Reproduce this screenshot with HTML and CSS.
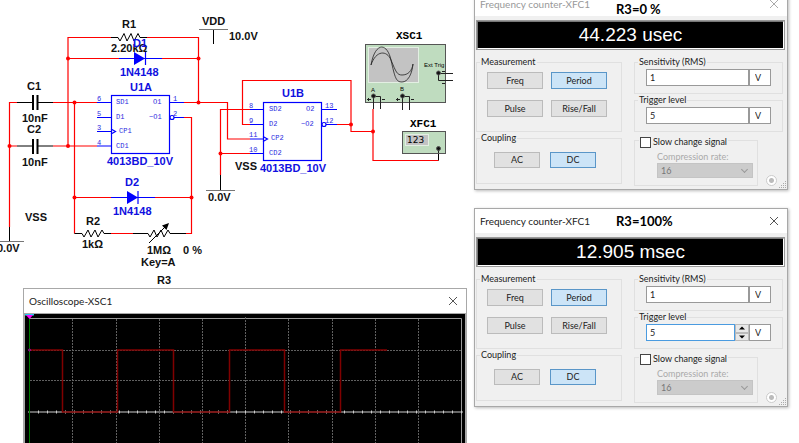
FILE: index.html
```html
<!DOCTYPE html>
<html lang="en">
<head>
  <meta charset="UTF-8" />
  <meta name="viewport" content="width=device-width, initial-scale=1" />
  <title>4013 oscillator</title>
  <link rel="stylesheet" href="styles.css">
</head>
<body>
  <main class="workspace">
    <div class="bench">
      <svg class="schematic" viewBox="0 0 474 288" role="img" aria-label="Oscillator schematic">
        <!-- red nets -->
        <g class="wire">
          <path d="M113 37.5H68V146M146 37.5H198.5V102.5M68 58.5H119M162 58.5H198.5" />
          <path d="M17 102.5H9.5V227M9.5 146H17M53 102.5H97M53 146H97M74.5 102.5V233.5" />
          <path d="M183 102.5H227.5V139H250M184 117.5H191.5V233.5H186" />
          <path d="M74.5 197.5H111M155 197.5H191.5M111 233.5H133" />
          <path d="M250 109.5H220.5V175M220.5 153.5H250M250 124.5H242.5V80.5H351V131.5H373M336 124.5H351" />
          <path d="M373 109V160.5H438.5" />
        </g>
        <g class="node">
          <circle cx="68" cy="58.5" r="2" /><circle cx="198.5" cy="58.5" r="2" />
          <circle cx="198.5" cy="102.5" r="2" /><circle cx="74.5" cy="102.5" r="2" />
          <circle cx="68" cy="146" r="2" /><circle cx="9.5" cy="146" r="2" />
          <circle cx="74.5" cy="197.5" r="2" /><circle cx="191.5" cy="197.5" r="2" />
          <circle cx="220.5" cy="153.5" r="2" /><circle cx="351" cy="124.5" r="2" />
          <circle cx="373" cy="131.5" r="2" />
        </g>

        <!-- resistors, capacitors, supplies -->
        <g class="part">
          <path d="M111 37.5H118L120 41L124 33.500L127 41L131 33.500L134 41L138 33.500L140 37.5H147" />
          <path d="M17 102.5H33M38 102.5H53M17 146H33M38 146H53" />
          <path d="M74.5 233.5H82L84 237L88 230L91 237L95 230L98 237L102 230L104 233.5H111" />
          <path d="M133 233.5H148L150 237L154 230L157 237L161 230L164 237L168 230L170 233.5H186" />
          <path d="M149 243L165 227" />
          <path d="M9.5 227V241.5M220.5 175V190M213.5 29.5V44M438.5 160.5V150" />
        </g>
        <path class="plate" d="M33 95V110M37.5 95V110M33 139V154M37.5 139V154" />
        <path class="rail" d="M0 241.500H24M206 190.500H235M199 29.500H228" />
        <path d="M169 223L166.500 230L162 225.500Z" />

        <!-- diodes and flip-flops -->
        <g class="chip">
          <path d="M119 58.5H162M145.500 52V65M111 197.5H155M138 191V204" />
          <rect x="111.500" y="95.500" width="58" height="58" />
          <path d="M97 102.5H111M97 117.5H111M97 131.5H111M97 146H111M169 102.5H184M174 117.5H184M111 129L115.500 131.5L111 134" />
          <circle cx="172" cy="117.5" r="2" />
          <rect x="263.500" y="102.500" width="58" height="58" />
          <path d="M250 109.5H263M250 124.5H263M250 139H263M250 153.5H263M321 109.5H337M326 124.5H337M263 136.500L267.500 139L263 141.500" />
          <circle cx="324" cy="124.5" r="2" />
        </g>
        <path class="diode" d="M134 52L145 58.5L134 65ZM127 191L138 197.5L127 204Z" />

        <g class="label">
          <text x="122" y="28">R1</text>
          <text x="111" y="52">2.20kΩ</text>
          <text x="202" y="25">VDD</text>
          <text x="229" y="40">10.0V</text>
          <text x="27" y="90">C1</text>
          <text x="22" y="122">10nF</text>
          <text x="27" y="133">C2</text>
          <text x="22" y="166">10nF</text>
          <text x="25" y="221">VSS</text>
          <text x="-3" y="252">0.0V</text>
          <text x="86" y="225">R2</text>
          <text x="82" y="248">1kΩ</text>
          <text x="147" y="254">1MΩ</text>
          <text x="183" y="254">0 %</text>
          <text x="141" y="266">Key=A</text>
          <text x="157" y="284">R3</text>
          <text x="208" y="201">0.0V</text>
          <text x="235" y="170">VSS</text>
        </g>
        <g class="label label-blue">
          <text x="133" y="47">D1</text>
          <text x="120" y="76">1N4148</text>
          <text x="130" y="91">U1A</text>
          <text x="107" y="165">4013BD_10V</text>
          <text x="125" y="186">D2</text>
          <text x="113" y="215">1N4148</text>
          <text x="282" y="97">U1B</text>
          <text x="260" y="172">4013BD_10V</text>
        </g>
        <g class="pin">
          <text x="97" y="101">6</text><text x="97" y="116">5</text>
          <text x="97" y="130">3</text><text x="97" y="145">4</text>
          <text x="173" y="101">1</text><text x="173" y="116">2</text>
          <text x="116" y="104">SD1</text><text x="116" y="119">D1</text>
          <text x="119" y="133">CP1</text><text x="116" y="148">CD1</text>
          <text x="153" y="104">O1</text><text x="149" y="119">~O1</text>
          <text x="249" y="108">8</text><text x="249" y="123">9</text>
          <text x="249" y="137">11</text><text x="249" y="152">10</text>
          <text x="325" y="108">13</text><text x="325" y="123">12</text>
          <text x="269" y="111">SD2</text><text x="269" y="126">D2</text>
          <text x="271" y="140">CP2</text><text x="269" y="155">CD2</text>
          <text x="306" y="111">O2</text><text x="301" y="126">~O2</text>
        </g>

        <!-- instruments -->
        <g class="instrument">
          <rect x="365.500" y="44.500" width="80" height="58" />
          <rect x="402.500" y="131.500" width="43" height="22" />
        </g>
        <g class="glass">
          <rect x="368.500" y="47.500" width="50" height="35" />
          <rect x="405.500" y="134.500" width="23" height="11" />
        </g>
        <g class="curve">
          <path d="M371 65C375 42 387 42 391 60C395 78 396 82 402 82C408 82 412 74 413 64" />
          <path d="M371 65C376 50 387 50 391 60C396 72 397 75 402 75C408 75 412 71 413 64" />
        </g>
        <g class="trace">
          <path d="M373.500 96V109M380.500 109V96.500H374M402.500 96V110M409.500 110V96.500H403M438 73.500H453M438.500 74V80.500H453M438.500 149V153" />
          <path d="M367 99.500H371M368.500 98V101M382 99.500H385M396 99.500H400M397.500 98V101M411 99.500H414M442 71.500H445M442 83.500H445" />
        </g>
        <g class="jack">
          <circle cx="373.500" cy="96" r="2" /><circle cx="402.500" cy="96" r="2" />
          <circle cx="438.500" cy="73" r="2" /><circle cx="438.500" cy="148.500" r="2" />
        </g>
        <g class="tag">
          <text x="371" y="92">A</text><text x="400" y="91">B</text>
          <text x="424" y="67">Ext Trig</text>
        </g>
        <text class="readout" x="407" y="143">123</text>
        <g class="label-mono">
          <text x="396" y="39">XSC1</text><text x="410" y="127">XFC1</text>
        </g>
      </svg>

      <section class="window scope" aria-label="Oscilloscope">
        <header class="titlebar">
          <h2>Oscilloscope-XSC1</h2>
          <button class="close" type="button" aria-label="Close"><svg viewBox="0 0 10 10"><path d="M1 1L9 9M9 1L1 9" /></svg></button>
        </header>
        <svg class="scope-screen" viewBox="25 314 440 129" role="img" aria-label="Square wave">
          <path class="frame" d="M29 318.500H461.500V443" />
          <path class="grid" d="M72.500 319V443M116.500 319V443M159.500 319V443M202.500 319V443M245.500 317V443M288.500 319V443M332.500 319V443M375.500 319V443M418.500 319V443M30 350.500H461M30 380.500H461" />
          <path class="axis" d="M28 412H463" />
          <path class="ticks" d="M29 412H463" />
          <path class="wave" d="M29 350H62.500V412H117.500V350H173.500V412H229.500V350H284.500V412H340.500V350H387" />
          <path class="cursor-line" d="M29.500 316V443" />
          <path class="cursor-cyan" d="M25 314H34V315.500H25Z" />
          <path class="cursor-flag" d="M26 315H33L29.500 319Z" />
          <circle class="cursor-dot" cx="29.500" cy="350" r="1" />
        </svg>
      </section>
    </div>

    <div class="counters">
      <section class="window counter inactive" aria-label="Frequency counter, R3 at 0 %">
        <header class="titlebar">
          <h2>Frequency counter-XFC1</h2>
          <strong class="note note-low">R3=0 %</strong>
          <button class="close" type="button" aria-label="Close"><svg viewBox="0 0 10 10"><path d="M1 1L9 9M9 1L1 9" /></svg></button>
        </header>
        <output class="lcd">44.223 usec</output>
        <form class="panel">
          <div class="column">
            <fieldset class="group measurement">
              <legend>Measurement</legend>
              <button type="button">Freq</button>
              <button type="button" class="on">Period</button>
              <button type="button">Pulse</button>
              <button type="button">Rise/Fall</button>
            </fieldset>
            <fieldset class="group coupling">
              <legend>Coupling</legend>
              <button type="button">AC</button>
              <button type="button" class="on">DC</button>
            </fieldset>
          </div>
          <div class="column">
            <fieldset class="group level">
              <legend>Sensitivity (RMS)</legend>
              <input class="value" type="text" value="1" aria-label="Sensitivity">
              <input class="unit" type="text" value="V" aria-label="Sensitivity unit">
            </fieldset>
            <fieldset class="group level">
              <legend>Trigger level</legend>
              <input class="value" type="text" value="5" aria-label="Trigger level">
              <input class="unit" type="text" value="V" aria-label="Trigger level unit">
            </fieldset>
            <div class="bottom">
              <fieldset class="group slow">
                <legend><input type="checkbox" id="slow-1"><label for="slow-1">Slow change signal</label></legend>
                <label class="off" for="rate-1">Compression rate:</label>
                <div class="rate"><select id="rate-1" disabled><option>16</option></select></div>
              </fieldset>
              <input class="lamp" type="radio" checked aria-label="Input active">
            </div>
          </div>
        </form>
        <svg class="grip" viewBox="0 0 8 8"><path d="M6 0h1v1h-1zM4 2h1v1h-1zM6 2h1v1h-1zM2 4h1v1h-1zM4 4h1v1h-1zM6 4h1v1h-1zM0 6h1v1h-1zM2 6h1v1h-1zM4 6h1v1h-1zM6 6h1v1h-1z" /></svg>
      </section>

      <section class="window counter" aria-label="Frequency counter, R3 at 100%">
        <header class="titlebar">
          <h2>Frequency counter-XFC1</h2>
          <strong class="note">R3=100%</strong>
          <button class="close" type="button" aria-label="Close"><svg viewBox="0 0 10 10"><path d="M1 1L9 9M9 1L1 9" /></svg></button>
        </header>
        <output class="lcd">12.905 msec</output>
        <form class="panel">
          <div class="column">
            <fieldset class="group measurement">
              <legend>Measurement</legend>
              <button type="button">Freq</button>
              <button type="button" class="on">Period</button>
              <button type="button">Pulse</button>
              <button type="button">Rise/Fall</button>
            </fieldset>
            <fieldset class="group coupling">
              <legend>Coupling</legend>
              <button type="button">AC</button>
              <button type="button" class="on">DC</button>
            </fieldset>
          </div>
          <div class="column">
            <fieldset class="group level">
              <legend>Sensitivity (RMS)</legend>
              <input class="value" type="text" value="1" aria-label="Sensitivity">
              <input class="unit" type="text" value="V" aria-label="Sensitivity unit">
            </fieldset>
            <fieldset class="group level">
              <legend>Trigger level</legend>
              <input class="value editing" type="text" value="5" aria-label="Trigger level" autofocus>
              <span class="spin">
                <button type="button" aria-label="Up"><svg viewBox="0 0 6 4"><path d="M0 3.500L3 0.500L6 3.500Z" /></svg></button>
                <button type="button" aria-label="Down"><svg viewBox="0 0 6 4"><path d="M0 0.500L3 3.500L6 0.500Z" /></svg></button>
              </span>
              <input class="unit" type="text" value="V" aria-label="Trigger level unit">
            </fieldset>
            <div class="bottom">
              <fieldset class="group slow">
                <legend><input type="checkbox" id="slow-2"><label for="slow-2">Slow change signal</label></legend>
                <label class="off" for="rate-2">Compression rate:</label>
                <div class="rate"><select id="rate-2" disabled><option>16</option></select></div>
              </fieldset>
              <input class="lamp" type="radio" checked aria-label="Input active">
            </div>
          </div>
        </form>
        <svg class="grip" viewBox="0 0 8 8"><path d="M6 0h1v1h-1zM4 2h1v1h-1zM6 2h1v1h-1zM2 4h1v1h-1zM4 4h1v1h-1zM6 4h1v1h-1zM0 6h1v1h-1zM2 6h1v1h-1zM4 6h1v1h-1zM6 6h1v1h-1z" /></svg>
      </section>
    </div>
  </main>
</body>
</html>
```
FILE: styles.css
```css
* {
  box-sizing: border-box;
  margin: 0;
  padding: 0;
}
body {
  font-family: Lato, "Open Sans", sans-serif;
  font-size: 9px;
  line-height: 12px;
  color: #222;
  background: #fff;
}
button, input, select {
  font: inherit;
  color: inherit;
  border-radius: 0;
}
.workspace {
  display: grid;
  grid-template-columns: 1fr 314px;
  padding-right: 11px;
  height: 100vh;
  overflow: hidden;
}
.bench {
  display: flex;
  flex-direction: column;
  min-width: 0;
}

/* Schematic */
.schematic {
  display: block;
  width: 100%;
  flex: none;
}
.wire, .part, .chip, .trace, .curve, .rail, .plate {
  fill: none;
  stroke-width: 1;
}
.wire {
  stroke: #f00;
  stroke-width: 1.2;
}
.node {
  fill: #f00;
}
.part, .plate {
  stroke: #000;
}
.plate {
  stroke-width: 2;
}
.rail {
  stroke: #777;
}
.chip {
  stroke: #00f;
  stroke-width: 1.2;
}
.diode {
  fill: #00f;
}
.label {
  font: bold 11px "Liberation Sans", Arial, sans-serif;
  fill: #111;
}
.label-blue {
  fill: #1010e0;
}
.label-mono {
  font: bold 11px "Liberation Mono", monospace;
}
.pin {
  font: 7px "Liberation Mono", monospace;
  fill: #2a2ae0;
}
.instrument {
  fill: #bfdcbf;
  stroke: #555;
}
.glass {
  fill: #c3c3c3;
  stroke: #e3efe3;
}
.trace, .curve {
  stroke: #222;
}
.curve {
  stroke-width: 0.8;
}
.jack {
  fill: #111;
  stroke: #555;
}
.tag {
  font: 6px "Liberation Sans", Arial, sans-serif;
}
.readout {
  font: 9px "DejaVu Sans", sans-serif;
}

/* Windows */
.window {
  display: flex;
  flex-direction: column;
  border: 1px solid #a8a8a8;
  background: #f0f0f0;
}
.titlebar {
  display: flex;
  align-items: center;
  height: 24px;
  padding: 0 8px 0 5px;
  background: #fff;
}
.titlebar h2 {
  font-size: 10px;
  font-weight: 400;
}
.close {
  width: 10px;
  height: 10px;
  margin-left: auto;
  border: none;
  background: none;
}
.close svg {
  display: block;
  fill: none;
  stroke: #555;
}
.note {
  margin-left: 26px;
  font-size: 13px;
  line-height: 14px;
  color: #000;
}
.note-low {
  align-self: flex-end;
}

/* Oscilloscope */
.scope {
  flex: none;
  margin: 0 7px 0 23px;
}
.scope-screen {
  display: block;
  border: solid #a8a8a8;
  border-width: 1px 1px 0;
  background: #000;
  fill: none;
}
.frame {
  stroke: #999;
}
.grid {
  stroke: #606060;
  stroke-dasharray: 2 1;
}
.axis {
  stroke: #666;
  stroke-width: 2;
}
.ticks {
  stroke: #ccc;
  stroke-width: 3;
  stroke-dasharray: 1 8;
}
.cursor-line {
  stroke: #007a00;
}
.wave {
  stroke: #800000;
  stroke-width: 1.5;
}
.cursor-cyan {
  fill: #2ce;
}
.cursor-flag {
  fill: #f0f;
}
.cursor-dot {
  stroke: #a0a;
}

/* Frequency counters */
.counters {
  display: flex;
  flex-direction: column;
  gap: 18px;
  margin-top: -9px;
}
.counter {
  position: relative;
  height: 199px;
  flex: none;
  box-shadow: 1px 1px 3px #bbb;
}
.inactive h2 {
  color: #999;
}
.inactive .close svg {
  stroke: #aaa;
}
.lcd {
  height: 28px;
  margin: 5px 3px 1px 2px;
  border: 1px solid #fff;
  border-top-color: #777;
  border-left-color: #777;
  box-shadow: 0 0 0 1px #999;
  background: #000;
  color: #fff;
  font: 19px/25px "Liberation Sans", Arial, sans-serif;
  text-align: center;
}
.panel {
  display: grid;
  grid-template-columns: 146px 149px;
  gap: 12px;
  padding: 6px 0 0 1px;
}
.column {
  display: flex;
  flex-direction: column;
}
.group {
  display: flex;
  border: 1px solid #e0e0e0;
  min-width: 0;
}
.group legend {
  padding: 0 1px;
}
.group button {
  height: 17px;
  border: 1px solid #bbb;
  background: #e1e1e1;
  line-height: 14px;
}
.group button.on {
  border-color: #5a96c8;
  background: #cce4f7;
}
.measurement {
  flex-wrap: wrap;
  gap: 11px 8px;
  height: 76px;
  padding: 4px 10px;
  align-content: flex-start;
}
.measurement legend {
  margin-left: -7px;
}
.measurement button {
  width: 56px;
}
.coupling {
  gap: 10px;
  height: 52px;
  padding: 8px 17px;
}
.coupling legend {
  margin-left: -14px;
}
.coupling button {
  width: 46px;
  height: 16px;
}
.level {
  height: 38px;
  padding: 1px 11px;
}
.level legend {
  margin-left: -8px;
}
.level input {
  height: 17px;
  border: 1px solid #999;
  background: #fff;
  padding: 0 3px;
}
.level .value {
  flex: 1;
  min-width: 0;
}
.level .value.editing {
  border-color: #4a9be0;
  outline: none;
}
.level .unit {
  width: 22px;
  padding: 0 5px;
}
.spin {
  display: flex;
  flex-direction: column;
  width: 14px;
  height: 17px;
}
.spin button {
  display: flex;
  align-items: center;
  justify-content: center;
  flex: 1;
  height: 8px;
  background: #e8e8e8;
}
.spin svg {
  width: 6px;
  height: 4px;
}
.bottom {
  display: flex;
  align-items: flex-end;
}
.slow {
  flex-direction: column;
  width: 124px;
  height: 54px;
  padding: 3px 4px 0 22px;
}
.slow legend {
  display: flex;
  align-items: center;
  gap: 2px;
  margin-left: -18px;
  padding-top: 4px;
}
.slow input {
  appearance: none;
  width: 11px;
  height: 11px;
  border: 1px solid #444;
  background: #fff;
}
.slow .off {
  color: #aaa;
}
.rate {
  position: relative;
}
.rate select {
  appearance: none;
  display: block;
  width: 100%;
  height: 15px;
  padding-left: 3px;
  border: 1px solid #c4c4c4;
  background: #ccc;
  color: #777;
  opacity: 1;
}
.rate::after {
  content: "";
  position: absolute;
  top: 4px;
  right: 6px;
  width: 4px;
  height: 4px;
  border: solid #999;
  border-width: 0 1px 1px 0;
  transform: rotate(45deg);
}
.lamp {
  appearance: none;
  width: 11px;
  height: 11px;
  margin-left: 8px;
  border: 1px solid #ccc;
  border-radius: 50%;
  background: radial-gradient(circle, #bbb 0 2px, #fff 3px);
}
.grip {
  position: absolute;
  right: 0;
  bottom: 0;
  width: 8px;
  height: 8px;
  fill: #aaa;
}
```
